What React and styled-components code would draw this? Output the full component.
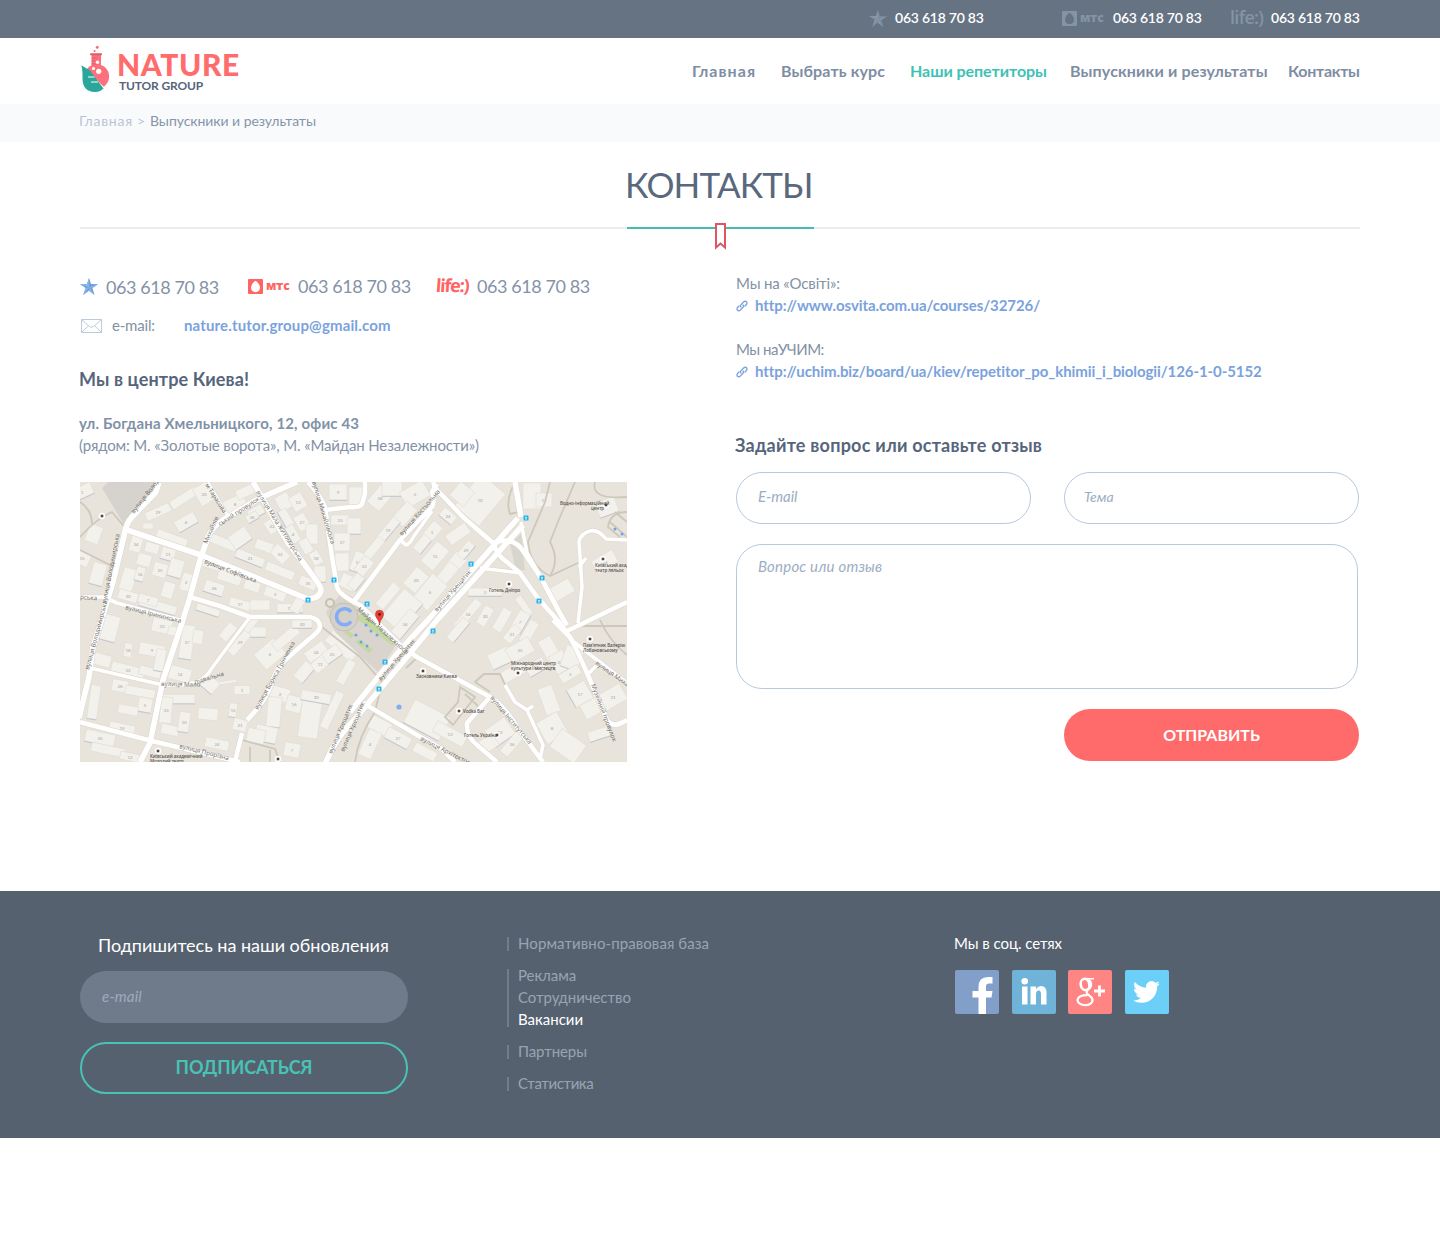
import React from "react";
import styled, { createGlobalStyle } from "styled-components";

const Global = createGlobalStyle`
  *, *::before, *::after { box-sizing: border-box; }
  body { margin: 0; background: #fff; }
  body, input, textarea, button { font-family: Lato, "Open Sans", sans-serif; }
  h1, h2, p, ul { margin: 0; padding: 0; }
  a { color: inherit; text-decoration: none; }
`;

const Page = styled.div`
  min-height: 1256px;
  color: #8391a5;
  font-size: 15px;
  line-height: 22px;
  white-space: nowrap;
`;
const Wrap = styled.div`
  width: 1280px;
  margin: 0 auto;
`;

const Label = styled.span`
  letter-spacing: ${(p) => p.$ls || 0}px;
`;

/* Operator marks */
const MtsMark = styled.span`
  display: inline-flex;
  align-items: center;
  width: 42px;
  gap: 3px;
  color: ${(p) => p.$color};
`;
const MtsWord = styled.span`
  font: 800 12px/16px "Open Sans", sans-serif;
  letter-spacing: -0.2px;
`;
const LifeMark = styled.span`
  display: inline-block;
  width: 33px;
  color: ${(p) => p.$color};
  font: ${(p) => p.$weight} 18px/20px "Open Sans", sans-serif;
  letter-spacing: ${(p) => p.$ls}px;
  transform: translateY(-1px) skewX(${(p) => p.$skew || 0}deg);
`;

function Star({ light, dark }) {
  return (
    <svg width="18" height="17" viewBox="0 0 18 17">
      <path d="M9 0 11 6 18 6.2 12.4 10 14.6 17 9 12.8 3.2 17 5.6 10 0 6.2 7 6Z" fill={dark} />
      <path d="M9 0V9.3L7 6ZM18 6.2 9 9.3 12.4 10ZM14.6 17 9 9.3V12.8ZM3.2 17 9 9.3 5.6 10ZM0 6.2 9 9.3 7 6Z" fill={light} />
    </svg>
  );
}
function Mts({ color, bg }) {
  return (
    <MtsMark $color={color}>
      <svg width="15" height="15" viewBox="0 0 15 15">
        <rect width="15" height="15" rx="1" fill={color} />
        <path d="M7.5 1.8C9.8 3.2 12 6 12 8.8 12 11.5 10 13.2 7.5 13.2S3 11.5 3 8.8C3 6 5.2 3.2 7.5 1.8Z" fill={bg} />
      </svg>
      <MtsWord>мтс</MtsWord>
    </MtsMark>
  );
}

/* Top bar */
const TopBar = styled.div`
  height: 38px;
  background: #657383;
`;
const TopPhones = styled(Wrap)`
  height: 38px;
  display: flex;
  justify-content: flex-end;
  align-items: center;
  padding-bottom: 2px;
`;
const TopPhone = styled.div`
  display: flex;
  align-items: center;
  gap: ${(p) => p.$gap}px;
  margin-left: ${(p) => p.$before || 0}px;
  color: #fff;
  font-weight: 600;
  font-size: 14px;
`;
const TopNumber = styled.span`
  width: 89px;
  letter-spacing: -0.24px;
`;

/* Header */
const Header = styled(Wrap)`
  height: 66px;
  display: flex;
  justify-content: space-between;
`;
const Logo = styled.a`
  display: flex;
  padding: 7px 0 0 1px;
  gap: 8px;
`;
const LogoText = styled.span`
  display: flex;
  flex-direction: column;
`;
const LogoName = styled.span`
  margin: 4px 0 0 -1px;
  color: #ff6c6c;
  font-weight: 900;
  font-size: 30px;
  line-height: 30px;
  letter-spacing: 0.6px;
`;
const LogoSub = styled.span`
  margin: 1px 0 0 1px;
  color: #56657a;
  font-weight: 700;
  font-size: 12px;
  line-height: 12px;
  letter-spacing: -0.15px;
`;
const Nav = styled.nav`
  display: flex;
  height: 65px;
  align-items: center;
`;
const NavLink = styled.a`
  width: ${(p) => p.$w}px;
  letter-spacing: ${(p) => p.$ls}px;
  color: ${(p) => (p.$active ? "#3ec2b3" : "#7e8da3")};
  font-weight: 700;
  font-size: 16px;
`;

const CrumbBar = styled.div`
  height: 38px;
  background: #f9fafc;
`;
const Crumbs = styled(Wrap)`
  display: flex;
  padding-top: 6px;
  font-size: 14px;
  color: #8595a9;
`;
const CrumbLink = styled.a`
  width: 58px;
  margin-left: -1px;
  color: #b9c5d5;
  letter-spacing: 0.73px;
`;
const CrumbArrow = styled.span`
  width: 13px;
  color: #b9c5d5;
`;

/* Title */
const TitleBlock = styled(Wrap)`
  display: flex;
  justify-content: center;
  height: 87px;
  border-bottom: 2px solid #e9eef2;
`;
const Title = styled.h1`
  position: relative;
  flex: none;
  width: 187px;
  height: 87px;
  margin-left: 1px;
  padding-top: 19px;
  border-bottom: 2px solid #42bdb0;
  color: #5a687d;
  font-weight: 400;
  font-size: 35px;
  line-height: 46px;
  letter-spacing: -0.85px;
  text-indent: -2px;
`;
const Ribbon = styled.svg`
  position: absolute;
  left: 88px;
  top: 81px;
`;

/* Content */
const Content = styled(Wrap)`
  height: 662px;
  display: flex;
  gap: 109px;
  padding-top: 43px;
`;
const Left = styled.section`
  width: 547px;
  padding-top: 4px;
`;
const Right = styled.section`
  width: 624px;
`;
const Phones = styled.div`
  display: flex;
  align-items: center;
  height: 22px;
  padding-bottom: 1px;
`;
const Phone = styled.div`
  display: flex;
  align-items: center;
  width: ${(p) => p.$w}px;
  gap: ${(p) => p.$gap}px;
  padding-bottom: ${(p) => p.$lift || 0}px;
  font-size: 18px;
  letter-spacing: -0.42px;
  color: #8492a8;
`;
const MailRow = styled.div`
  display: flex;
  align-items: center;
  margin-top: 16px;
  padding-left: 1px;
`;
const Envelope = styled.svg`
  margin-top: 2px;
`;
const MailLabel = styled.span`
  width: 72px;
  margin-left: 10px;
  letter-spacing: -0.2px;
`;
const BlueLink = styled.a`
  color: #7aa2dd;
  font-weight: 700;
  letter-spacing: ${(p) => p.$ls}px;
`;
const Heading = styled.h2`
  margin: ${(p) => p.$top}px 0 0 -1px;
  color: #56657b;
  font-weight: 700;
  font-size: 18px;
  line-height: 22px;
  letter-spacing: ${(p) => p.$ls}px;
`;
const Address = styled.p`
  margin: 22px 0 26px -1px;
`;
const Street = styled.strong`
  display: block;
  letter-spacing: 0.15px;
  color: #8191a8;
`;
const LinkGroup = styled.div`
  margin-bottom: 22px;
`;
const LinkRow = styled.div`
  display: flex;
  align-items: center;
  gap: 7px;
`;
const Chain = styled.svg`
  margin-top: 2px;
`;

const Form = styled.form`
  display: grid;
  grid-template-columns: 295px 295px;
  column-gap: 33px;
  row-gap: 20px;
  margin-top: 16px;
`;
const Field = styled.input`
  height: 52px;
  padding: 0 ${(p) => p.$pad}px 4px;
  border: 1px solid #b9c9dd;
  border-radius: 26px;
  outline: 0;
  background: #fff;
  font-size: ${(p) => p.$size}px;
  font-style: italic;
  &::placeholder { color: #9badc1; opacity: 1; }
`;
const Message = styled.textarea`
  grid-column: 1 / 3;
  width: 622px;
  height: 145px;
  padding: 10px 21px;
  border: 1px solid #b9c9dd;
  border-radius: 26px;
  outline: 0;
  resize: none;
  font-size: 15px;
  line-height: 22px;
  font-style: italic;
  letter-spacing: 0.2px;
  &::placeholder { color: #9badc1; opacity: 1; }
`;
const Submit = styled.button`
  grid-column: 2;
  height: 52px;
  padding: 0 0 2px;
  border: 0;
  border-radius: 26px;
  background: #ff6b6b;
  color: #fff;
  font-weight: 700;
  font-size: 16px;
`;

/* Footer */
const Foot = styled.footer`
  height: 247px;
  background: #56616f;
`;
const FootRow = styled(Wrap)`
  display: flex;
`;
const Subscribe = styled.form`
  width: 328px;
  display: flex;
  flex-direction: column;
  padding-top: 43px;
`;
const SubTitle = styled.h2`
  color: #fff;
  font-weight: 400;
  font-size: 18px;
  line-height: 22px;
  letter-spacing: -0.03px;
  padding-left: 18px;
`;
const SubField = styled.input`
  height: 52px;
  margin: 15px 0 19px;
  padding: 0 22px 3px;
  border: 0;
  border-radius: 26px;
  background: #6f7b8b;
  font-size: 15px;
  font-style: italic;
  letter-spacing: 0.2px;
  &::placeholder { color: #9fabbb; opacity: 1; }
`;
const SubButton = styled.button`
  height: 52px;
  padding: 0 0 2px;
  border: 2px solid #48c2b4;
  border-radius: 26px;
  background: none;
  color: #48c2b4;
  font-weight: 700;
  font-size: 18px;
  letter-spacing: -0.15px;
`;
const Links = styled.div`
  width: 447px;
  margin-left: 99px;
  padding-top: 41px;
  display: flex;
  flex-direction: column;
  gap: 10px;
`;
const LinkBlock = styled.div`
  display: flex;
  flex-direction: column;
  padding-left: 11px;
  background: linear-gradient(#717d8c, #717d8c) 0 5px / 2px calc(100% - 8px) no-repeat;
`;
const FootLink = styled.a`
  color: ${(p) => (p.$active ? "#fff" : "#99a4b2")};
  letter-spacing: ${(p) => p.$ls || 0}px;
`;
const Social = styled.div`
  padding-top: 41px;
`;
const SocialTitle = styled.p`
  color: #fff;
  letter-spacing: -0.05px;
`;
const Icons = styled.div`
  display: flex;
  gap: 12.6px;
  padding: 16px 0 0 1px;
`;
const Tile = styled.a`
  width: 44px;
  height: 44px;
  border-radius: 2px;
  overflow: hidden;
  background: ${(p) => p.$bg};
`;

/* Map */
const MapBox = styled.svg`
  display: block;
  width: 547px;
  height: 280px;
`;
const roads = [
  [6, "M79 0 76 10 52 35Q46 41 44 54L33 100 20 143 13 165 9 195-1 236"],
  [6, "M47 48 121 73 228 117Q241 116 241 107 240 102 208 61L173 0"],
  [5, "M228 0Q238 10 245 25L252 75 257 105Q259 113 280 123L300 143 320 163 337 175 410 215Q425 225 437 245L463 280"],
  [6, "M217 0 180 16 143 38Q132 45 128 55L120 78 110 115 102 141 83 198 70 261 60 280"],
  [3, "M128 0 148 34"],
  [4, "M0 115H23L37 121 100 138"],
  [5, "M110 115 140 124 170 135H230Q240 137 240 145 239 150 228 158L203 180Q195 190 190 205T167 238"],
  [5, "M162 251 155 280"],
  [4, "M170 135 143 171 127 193Q120 201 102 203H83L10 186"],
  [5, "M0 240 72 259 160 280"],
  [5, "M245 28 270 25Q280 26 282 22L285 12V0"],
  [6, "M270 230 320 168 348 138 438 36M435 0 441 35"],
  [6, "M245 282Q256 255 275 237L327 175 357 138 443 43"],
  [4, "M441 40 447 71 470 111 487 143"],
  [5, "M353 0Q355 8 363 14L383 35 413 61Q418 75 427 80L440 91 457 115 480 141 493 160"],
  [5, "M413 61Q435 53 445 72L461 96 480 132 487 143"],
  [4, "M400 86 440 91"],
  [5, "M272 121 275 118 320 58 352 25Q355 20 352 10L357 2"],
  [4, "M320 58 326 63Q330 62 334 54L352 29"],
  [4, "M547 58 526 57Q518 47 510 49 500 52 499 60L502 105 498 141"],
  [4, "M499 85 506 76"],
  [5, "M547 120 487 149"],
  [5, "M473 138 490 155Q496 166 507 191L527 238Q533 247 547 238"],
  [4, "M494 160 517 178 547 201M517 183 508 192"],
  [5, "M410 215 387 241Q386 255 397 263L417 280"],
  [4, "M425 203 435 220 447 228 463 263 460 277M447 228 453 224"],
  [5, "M283 221 337 253Q350 260 363 268L375 280"],
];
const paths = [
  "M0 20Q12 28 12 42M0 55Q17 36 32 30L47 48M0 68 30 83M30 83 38 85",
  "M435 0Q425 18 430 32L439 30M470 0 465 20 448 60Q450 84 470 94L500 80",
  "M495 0 480 35 470 60Q480 78 470 94M515 0Q510 18 547 15M547 30Q530 30 528 45L540 55",
  "M530 40 547 55M535 30 547 40M492 144H547M520 138Q530 160 547 173",
  "M242 145 280 175 302 200 295 230Q278 255 275 280M327 163 338 175 326 186",
  "M410 210 395 200 404 192H420L425 203M380 205 395 215 373 243 365 235 378 220ZM385 212 398 224",
  "M162 258 195 267 200 280M170 265V280M190 268V280",
];
const buildings = [
  [2, 10, 22, 12, -25], [14, 52, 14, 18, 20], [2, 76, 16, 14, 25], [18, 92, 14, 22, 15],
  [78, 30, 26, 9, -24], [104, 16, 30, 9, -32], [106, 40, 22, 12, -30], [68, 44, 10, 6, 0], [124, 12, 16, 20, -30],
  [92, 56, 32, 8, 20], [56, 62, 12, 16, 16], [72, 66, 14, 10, 16], [88, 72, 14, 12, 16], [64, 78, 14, 12, 16],
  [80, 88, 14, 14, 16], [96, 86, 14, 18, 16], [106, 100, 10, 18, 16], [48, 98, 14, 24, 16], [60, 92, 9, 14, 16],
  [88, 108, 12, 16, 16], [48, 114, 20, 10, 16], [78, 124, 38, 9, 16], [68, 118, 20, 9, 16],
  [142, 60, 32, 9, 22], [170, 76, 30, 9, 22], [200, 89, 30, 9, 22], [228, 101, 18, 10, 22], [160, 56, 20, 15, -35],
  [132, 82, 20, 10, 18], [150, 94, 24, 14, 18], [134, 106, 20, 12, 18], [172, 104, 16, 10, 18], [195, 112, 22, 10, 20],
  [128, 128, 24, 7, 18], [160, 122, 22, 9, 16], [180, 123, 20, 10, 0], [210, 126, 26, 9, 0], [218, 122, 18, 10, -60],
  [155, 22, 22, 14, -25], [176, 30, 16, 10, -30], [192, 44, 14, 12, 58], [165, 10, 18, 10, -25], [172, 35, 12, 8, -30],
  [204, 20, 14, 16, -30], [218, 20, 16, 14, 60], [206, 36, 18, 9, 60], [222, 40, 16, 12, 60], [232, 52, 12, 20, 0],
  [213, 52, 18, 9, 60], [226, 64, 15, 10, 60], [236, 76, 14, 10, 60], [240, 92, 12, 16, 0], [200, 72, 18, 12, 45],
  [184, 64, 18, 10, 20], [258, 10, 18, 16, 0], [276, 14, 14, 18, 0], [260, 38, 18, 10, 0], [274, 44, 14, 16, 0],
  [262, 60, 16, 18, 0], [262, 80, 14, 18, 0], [278, 80, 12, 20, 20], [268, 100, 16, 14, 25],
  [300, 16, 22, 16, -50], [312, 6, 20, 16, 0], [335, 12, 26, 18, -30], [325, 32, 22, 14, -48], [308, 48, 28, 9, -50],
  [294, 66, 24, 9, -50], [284, 84, 18, 12, -50], [276, 100, 16, 10, -50], [400, 18, 42, 32, -50], [382, 12, 18, 18, -50],
  [368, 34, 16, 10, 40], [378, 52, 24, 12, -35], [352, 50, 20, 12, -50], [342, 62, 18, 10, -50], [355, 74, 26, 16, -50],
  [375, 82, 22, 14, -50], [386, 68, 18, 9, -50], [366, 93, 26, 12, -50], [350, 110, 32, 20, -50], [322, 128, 36, 24, -50],
  [336, 98, 22, 16, -50], [308, 114, 28, 10, -50], [325, 142, 30, 12, -50], [452, 14, 18, 26, 0], [464, 18, 16, 14, 0],
  [527, 25, 20, 16, -20], [525, 80, 24, 15, -30], [482, 108, 22, 15, -30], [405, 110, 34, 8, 0], [444, 124, 22, 7, 55],
  [388, 132, 34, 9, -50], [378, 148, 26, 9, -50], [405, 134, 20, 10, -60], [422, 138, 24, 10, -60], [440, 140, 22, 12, -60],
  [449, 150, 24, 10, -60], [432, 152, 18, 10, -50], [420, 176, 22, 16, -25], [440, 168, 26, 16, -30], [434, 190, 26, 12, -30],
  [456, 185, 20, 12, -30], [470, 168, 26, 14, 60], [480, 180, 20, 16, 60], [492, 176, 18, 22, 20], [490, 192, 22, 10, -30],
  [469, 218, 28, 15, 70], [500, 212, 20, 20, 60], [512, 226, 16, 20, 60], [533, 215, 24, 18, -30], [519, 252, 22, 10, -18],
  [472, 246, 24, 24, -30], [488, 264, 30, 22, 35], [420, 250, 24, 20, -35], [408, 262, 18, 14, -35], [432, 262, 26, 10, -50],
  [347, 238, 40, 26, 28], [370, 252, 34, 12, 28], [300, 244, 22, 14, 28], [318, 256, 26, 12, 28], [345, 270, 24, 10, 28],
  [290, 262, 14, 28, 25], [30, 146, 16, 26, 15], [48, 168, 8, 14, 8], [22, 178, 18, 12, 15], [48, 188, 34, 10, 14],
  [70, 190, 22, 9, 14], [72, 168, 26, 12, 10], [80, 178, 10, 22, 10], [82, 144, 20, 14, 12], [98, 150, 20, 9, 10],
  [107, 160, 13, 34, 8], [118, 155, 10, 14, 8], [100, 192, 22, 14, 15], [14, 220, 10, 34, 8], [40, 204, 16, 12, 10],
  [60, 210, 30, 9, 10], [65, 223, 14, 14, 10], [48, 228, 20, 9, 10], [42, 246, 26, 9, 12], [98, 217, 34, 9, 0],
  [86, 228, 12, 26, 5], [90, 248, 18, 10, 12], [104, 240, 11, 20, 8], [128, 232, 20, 12, 5], [137, 262, 24, 10, 12],
  [130, 202, 16, 14, 40], [162, 208, 16, 9, 0], [148, 200, 18, 3, -10], [153, 228, 8, 14, 8], [148, 150, 18, 10, -50],
  [160, 160, 30, 9, -50], [178, 150, 16, 10, 0], [190, 172, 26, 20, -40], [206, 156, 30, 10, -40], [222, 142, 20, 8, 0],
  [170, 142, 16, 9, -50], [236, 170, 22, 12, -35], [224, 190, 20, 12, -50], [240, 182, 16, 12, -40], [262, 164, 34, 14, 40],
  [252, 172, 18, 12, -35], [266, 190, 26, 9, -60], [200, 212, 20, 14, 15], [194, 230, 14, 30, 5], [214, 222, 16, 16, 15],
  [230, 236, 20, 40, 8], [236, 215, 30, 10, 10], [252, 228, 9, 40, 25], [212, 268, 16, 14, 10], [186, 252, 22, 16, 12],
  [160, 243, 14, 12, 15], [176, 254, 18, 14, 12], [20, 256, 30, 12, 12], [28, 268, 34, 9, 12], [50, 275, 20, 8, 12],
];
const streets = [
  [54, 32, -52, "вулиця Володимирська"], [26, 122, -79, "вулиця Володимирська"], [9, 188, -75, "вулиця Володимирська"],
  [125, 3, 57, "м Тарасова"], [127, 62, -66, "Михайлів"], [140, 44, -33, "ський провулок"],
  [176, 10, 58, "вулиця Мала Житомирська"], [232, 0, 73, "вулиця Михайлівська"], [124, 81, 21, "вулиця Софіївська"],
  [45, 127, 14, "вулиця Ірининська"], [0, 117, 4, "рська"], [81, 204, 1, "вулиця Мало"], [115, 202, -16, "підвальна"],
  [178, 228, -61, "вулиця Бориса Грінченка"], [99, 266, 14, "вулиця Прорізна"], [322, 54, -49, "вулиця Костьольна"],
  [357, 130, -49, "вулиця Хрещатик"], [301, 199, -49, "вулиця Хрещатик"], [252, 272, -67, "вулиця Хрещатик"],
  [277, 128, 42, "Майдан Незалежності"], [410, 216, 50, "вулиця Інститутська"], [340, 258, 27, "вулиця Архітектора"],
  [515, 182, 35, "вулиця Михайла"], [511, 203, 69, "Музейний провулок"], [264, 270, -67, "вулиця Хрещатик"],
];
const places = [
  [480, 23, "Водно-інформаційний"], [511, 28, "центр"], [515, 85, "Київський академ"], [515, 90, "театр ляльок"],
  [409, 110, "Готель Дніпро"], [503, 165, "Пам'ятник Валерію"], [503, 170, "Лобановському"],
  [431, 183, "Міжнародний центр"], [431, 188, "культури і мистецтв"], [336, 196, "Засновники Києва"],
  [383, 231, "Vodka Bar"], [384, 255, "Готель Україна"], [70, 276, "Київський академічний"], [70, 281, "Молодий театр"],
];
const stops = [[228, 118], [254, 98], [446, 36], [391, 82], [462, 96], [459, 119], [287, 122], [353, 149], [305, 180], [299, 207]];
const pins = [[22, 34], [526, 23], [523, 77], [429, 102], [510, 157], [343, 189], [379, 229], [438, 191], [417, 253], [78, 269], [198, 277]];
const dots = [[286, 143], [291, 149], [297, 153], [276, 153], [281, 160], [287, 164], [535, 47], [542, 52]];

function CityMap() {
  return (
    <MapBox viewBox="0 0 547 280">
      <rect width="547" height="280" fill="#e8e4dc" />
      <path d="M28 0H78L52 34 46 46 22 6Z" fill="#d6d2ce" />
      {buildings.map(([x, y, w, h, a], i) => (
        <g key={i} transform={`translate(${x} ${y}) rotate(${a})`}>
          <rect x={-w / 2} y={-h / 2} width={w} height={h} fill="#f3f1eb" stroke="#e0dcd3" strokeWidth=".6" />
          {i % 3 === 0 && <path d={`M${-w / 2} ${h / 2 + 0.4}H${w / 2}`} stroke="#bfc0ce" strokeWidth=".8" />}
          {i % 2 === 0 && (
            <text transform={`rotate(${-a})`} y="1.5" textAnchor="middle" fontSize="4.5" fill="#aaa69f">
              {((i * 7) % 37) + 1}
            </text>
          )}
        </g>
      ))}
      <path d="M246 130 262 110 282 120 317 162 298 190 255 150Z" fill="#d9d5ce" />
      <path d="M430 62 441 52 445 88 436 88Z" fill="#d8d4ce" />
      {paths.map((d) => (
        <path key={d} d={d} fill="none" stroke="#cdc8bb" strokeWidth="1.8" />
      ))}
      <path d="M281 131 319 160 312 163 277 137Z" fill="#c3d8a1" />
      <path d="m267 148 8 5-4 3-7-5Zm12 9 7 5-3 4-8-6Zm8 7 6 3-4 4-6-4Z" fill="#c3d8a1" />
      {roads.map(([w, d]) => (
        <path key={"c" + d} d={d} fill="none" stroke="#dcd7cc" strokeWidth={w + 0.6} strokeLinejoin="round" />
      ))}
      {roads.map(([w, d]) => (
        <path key={d} d={d} fill="none" stroke="#fff" strokeWidth={w - 0.4} strokeLinejoin="round" />
      ))}
      <circle cx="264" cy="135" r="14" fill="#d4d0ca" stroke="#c6c0b2" />
      <circle cx="250" cy="121" r="4" fill="#e9e5dd" stroke="#c6c0b2" strokeWidth="2" />
      <path d="M271 130A8 8 0 1 0 271 139.500" fill="none" stroke="#82adf3" strokeWidth="3.500" />
      {streets.map(([x, y, a, s]) => (
        <text key={x + s} transform={`translate(${x} ${y}) rotate(${a})`} fontSize="6.2" fill="#6d6a66" fontFamily="Open Sans, sans-serif">
          {s}
        </text>
      ))}
      {stops.map(([x, y]) => (
        <g key={x}>
          <rect x={x - 2.5} y={y - 2.5} width="5" height="5" rx=".6" fill="#24b3ea" />
          <path d={`M${x - 1} ${y - 0.6}h2M${x - 1} ${y + 1}h2`} stroke="#fff" strokeWidth=".8" />
        </g>
      ))}
      {pins.map(([x, y]) => (
        <g key={x}>
          <circle cx={x} cy={y} r="3.2" fill="#fff" />
          <rect x={x - 1.3} y={y - 1.3} width="2.6" height="2.6" fill="#55403c" />
        </g>
      ))}
      {places.map(([x, y, s]) => (
        <text key={s} x={x} y={y} fontSize="4.5" fontWeight="600" letterSpacing="-.1" fill="#5b5450" fontFamily="Open Sans, sans-serif">
          {s}
        </text>
      ))}
      {dots.map(([x, y]) => (
        <circle key={x} cx={x} cy={y} r="1.5" fill="#6f9ff0" />
      ))}
      <circle cx="319" cy="225" r="2.6" fill="#82adf3" />
      <path d="M299.500 143C299.500 138 295.500 136 295.500 132.300A4 4 0 0 1 303.500 132.300C303.500 136 299.500 138 299.500 143Z" fill="#ea4335" stroke="#b52a22" strokeWidth=".6" />
      <circle cx="299.500" cy="132.300" r="1.4" fill="#5c1410" />
    </MapBox>
  );
}

const ChainIcon = () => (
  <Chain width="12" height="12" viewBox="0 0 12 12" fill="none" stroke="#7aa2dd" strokeWidth="1.3" strokeLinecap="round">
    <path d="M5 7Q3.900 5.700 5 4.600L7.600 2Q9 .7 10.400 1.600 11.600 3 10.400 4.500L9 6" />
    <path d="M7 5Q8.100 6.300 7 7.400L4.400 10Q3 11.300 1.600 10.400.4 9 1.600 7.500L3 6" />
  </Chain>
);

const LogoMark = () => (
  <svg width="29" height="48" viewBox="0 0 29 48">
    <circle cx="16.300" cy="2.300" r="1.500" fill="#fb6f7b" />
    <circle cx="13.600" cy="6" r="1.100" fill="#fb6f7b" />
    <circle cx="15.800" cy="31.500" r="12.300" fill="#fb717d" />
    <path d="M10.500 10H20V22H10.500Z" fill="#fb717d" />
    <rect x="9" y="8.300" width="12" height="2" rx=".8" fill="#e05c6c" />
    <path d="M10.500 13H16M10.500 16H14M10.500 19H16" stroke="#e05c6c" strokeWidth=".9" />
    <circle cx="16.500" cy="17.300" r="1.700" fill="#fff" />
    <circle cx="12.500" cy="23.500" r="1.600" fill="#fff" />
    <circle cx="17.700" cy="26.300" r="2.600" fill="#fff" />
    <path d="M-.6 19 24.500 43.500 22 49H-2Z" fill="#fff" />
    <path d="M.3 20.300 9 25.500 22.500 43.500Q19 47 14 47C6 47 1.300 42 1.500 33Q1.700 25 .3 20.300Z" fill="#2aa79b" />
    <path d="M7 32H13.500M10 37H17" stroke="#fff" strokeWidth="1" fill="none" />
  </svg>
);

const nav = [
  ["Главная", 89, 1.05], ["Выбрать курс", 129, 0.13], ["Наши репетиторы", 160, -0.05, true],
  ["Выпускники и результаты", 218, 0.15], ["Контакты", 72, -0.27],
];

export default function App() {
  return (
    <Page>
      <Global />
      <TopBar>
        <TopPhones>
          <TopPhone $gap={8}><Star light="#8797a8" dark="#7b8b9d" /><TopNumber>063 618 70 83</TopNumber></TopPhone>
          <TopPhone $gap={9} $before={78}><Mts color="#8494a5" bg="#657383" /><TopNumber>063 618 70 83</TopNumber></TopPhone>
          <TopPhone $gap={8} $before={28}><LifeMark $weight={600} $ls={-0.7} $color="#8494a5">life:)</LifeMark><TopNumber>063 618 70 83</TopNumber></TopPhone>
        </TopPhones>
      </TopBar>

      <Header as="header">
        <Logo href="#">
          <LogoMark />
          <LogoText>
            <LogoName>NATURE</LogoName>
            <LogoSub>TUTOR GROUP</LogoSub>
          </LogoText>
        </Logo>
        <Nav>
          {nav.map(([t, w, ls, active]) => (
            <NavLink key={t} href="#" $w={w} $ls={ls} $active={active}>{t}</NavLink>
          ))}
        </Nav>
      </Header>

      <CrumbBar>
        <Crumbs>
          <CrumbLink href="#">Главная</CrumbLink>
          <CrumbArrow>&gt;</CrumbArrow>
          <Label $ls={-0.05}>Выпускники и результаты</Label>
        </Crumbs>
      </CrumbBar>

      <TitleBlock>
        <Title>
          КОНТАКТЫ
          <Ribbon width="11" height="27" viewBox="0 0 11 27">
            <path d="M1 1H10V24.500L5.500 20.500 1 24.500Z" fill="#fff" stroke="#df5661" strokeWidth="2" />
          </Ribbon>
        </Title>
      </TitleBlock>

      <Content as="main">
        <Left>
          <Phones>
            <Phone $w={168} $gap={8}><Star light="#8db5e6" dark="#6e9fdb" />063 618 70 83</Phone>
            <Phone $w={188} $gap={8} $lift={1}><Mts color="#ff6464" bg="#fff" />063 618 70 83</Phone>
            <Phone $w={155} $gap={8} $lift={1}><LifeMark $weight={700} $ls={-1.2} $skew={-4} $color="#ff6464">life:)</LifeMark>063 618 70 83</Phone>
          </Phones>
          <MailRow>
            <Envelope width="21" height="14" viewBox="0 0 21 14" fill="none" stroke="#bccadb">
              <path d="M.5.5H20.500V13.500H.5ZM.5.5 8.500 7.500Q10.500 9 12.500 7.500L20.500.5M.5 13.500 7.500 6.700M20.500 13.500 13.500 6.700" />
            </Envelope>
            <MailLabel>e-mail:</MailLabel>
            <BlueLink href="#" $ls={0.14}>nature.tutor.group@gmail.com</BlueLink>
          </MailRow>
          <Heading $top={32} $ls={0.12}>Мы в центре Киева!</Heading>
          <Address>
            <Street>ул. Богдана Хмельницкого, 12, офис 43</Street>
            <Label $ls={-0.14}>(рядом: М. «Золотые ворота», М. «Майдан Незалежности»)</Label>
          </Address>
          <CityMap />
        </Left>

        <Right>
          <LinkGroup>
            <Label $ls={-0.15}>Мы на «Освіті»:</Label>
            <LinkRow><ChainIcon /><BlueLink href="#" $ls={-0.07}>http://www.osvita.com.ua/courses/32726/</BlueLink></LinkRow>
          </LinkGroup>
          <LinkGroup>
            <Label $ls={-0.5}>Мы наУЧИМ:</Label>
            <LinkRow><ChainIcon /><BlueLink href="#" $ls={-0.09}>http://uchim.biz/board/ua/kiev/repetitor_po_khimii_i_biologii/126-1-0-5152</BlueLink></LinkRow>
          </LinkGroup>
          <Heading $top={52} $ls={0.23}>Задайте вопрос или оставьте отзыв</Heading>
          <Form>
            <Field placeholder="E-mail" $pad={21} $size={15} />
            <Field placeholder="Тема" $pad={19} $size={14} />
            <Message placeholder="Вопрос или отзыв" />
            <Submit type="button">ОТПРАВИТЬ</Submit>
          </Form>
        </Right>
      </Content>

      <Foot>
        <FootRow>
          <Subscribe>
            <SubTitle>Подпишитесь на наши обновления</SubTitle>
            <SubField placeholder="e-mail" />
            <SubButton type="button">ПОДПИСАТЬСЯ</SubButton>
          </Subscribe>
          <Links>
            <LinkBlock><FootLink href="#" $ls={0.09}>Нормативно-правовая база</FootLink></LinkBlock>
            <LinkBlock>
              <FootLink href="#" $ls={-0.06}>Реклама</FootLink>
              <FootLink href="#" $ls={-0.05}>Сотрудничество</FootLink>
              <FootLink href="#" $active>Вакансии</FootLink>
            </LinkBlock>
            <LinkBlock><FootLink href="#" $ls={-0.09}>Партнеры</FootLink></LinkBlock>
            <LinkBlock><FootLink href="#" $ls={-0.4}>Статистика</FootLink></LinkBlock>
          </Links>
          <Social>
            <SocialTitle>Мы в соц. сетях</SocialTitle>
            <Icons>
              <Tile $bg="#829fc9" href="#">
                <svg width="44" height="44" viewBox="0 0 44 44"><path d="M23.500 44V27.500H17.500V21H23.500V17Q23.500 7 33 7H37.500V13.500H34Q31 13.500 31 16.500V21H37.500L36.500 27.500H31V44Z" fill="#fff" /></svg>
              </Tile>
              <Tile $bg="#6fb3d8" href="#">
                <svg width="44" height="44" viewBox="0 0 44 44" fill="#fff">
                  <circle cx="12.700" cy="11.300" r="3.300" />
                  <path d="M10 16.500H15.500V34.500H10ZM18.500 16.500H24V19Q26 16 29 16 34.500 16 34.500 22.500V34.500H29V24.500Q29 20.500 26.700 20.500 24 20.500 24 24.500V34.500H18.500Z" />
                </svg>
              </Tile>
              <Tile $bg="#ff8484" href="#">
                <svg width="44" height="44" viewBox="0 0 44 44" fill="none" stroke="#fff">
                  <path d="M26 8.800H18.500" strokeWidth="1.600" />
                  <ellipse cx="17" cy="14.500" rx="4.300" ry="5.700" strokeWidth="2.600" transform="rotate(-12 17 14.500)" />
                  <path d="M20.500 9.500Q25 13 22 18 17.500 21.500 19 23.500L23.500 27.500Q26 31 22.500 33.700 18.500 36 13.500 34.500 8 32 10 28.500 12 25 19.500 25.200" strokeWidth="2.200" />
                  <path d="M31.500 15.500V26.500M26 21H37" strokeWidth="2.800" />
                </svg>
              </Tile>
              <Tile $bg="#6ccff8" href="#">
                <svg width="44" height="44" viewBox="0 0 44 44" fill="#fff"><g transform="translate(8 8.500) scale(1.120)"><path d="M23.950 4.570a10 10 0 0 1-2.820.77 4.960 4.960 0 0 0 2.160-2.720c-.95.550-2 .950-3.130 1.180a4.920 4.920 0 0 0-8.380 4.480C7.690 8.100 4.070 6.130 1.640 3.160a4.920 4.920 0 0 0 1.520 6.570 4.900 4.900 0 0 1-2.230-.61v.06a4.920 4.920 0 0 0 3.950 4.830 5 5 0 0 1-2.210.08 4.940 4.940 0 0 0 4.600 3.420A9.870 9.870 0 0 1 0 19.540a13.990 13.990 0 0 0 7.550 2.210c9.050 0 14-7.500 14-13.980 0-.21 0-.42-.02-.63a9.940 9.940 0 0 0 2.420-2.570Z" /></g></svg>
              </Tile>
            </Icons>
          </Social>
        </FootRow>
      </Foot>
    </Page>
  );
}
